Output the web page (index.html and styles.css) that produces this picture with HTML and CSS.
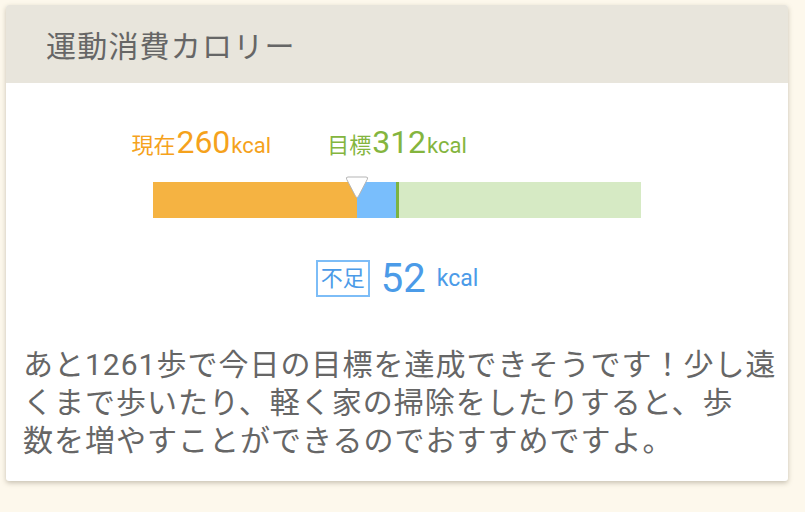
FILE: index.html
```html
<!DOCTYPE html>
<html lang="ja">
<head>
<meta charset="utf-8">
<link rel="stylesheet" href="styles.css">
</head>
<body>
<div class="card">
  <div class="card-header">運動消費カロリー</div>
  <div class="card-body">
    <div class="labels">
      <div class="label label-current"><span class="lab-jp">現在</span><span class="lab-num">260</span><span class="lab-unit">kcal</span></div>
      <div class="label label-target"><span class="lab-jp">目標</span><span class="lab-num">312</span><span class="lab-unit">kcal</span></div>
      <div></div>
    </div>
    <div class="bar">
      <div class="seg seg-current" style="width:204px"></div>
      <div class="seg seg-lack" style="width:39px"></div>
      <div class="seg seg-goal"></div>
      <div class="seg seg-rest"></div>
      <svg class="marker" style="left:192px" width="24" height="23" viewBox="0 0 24 23">
        <path d="M3 1 H21 Q23.5 1 22.3 3.3 L13.3 20.6 Q12 22.6 10.7 20.6 L1.7 3.3 Q0.5 1 3 1 Z" fill="#ffffff" stroke="#b5b5b5" stroke-width="1"/>
      </svg>
    </div>
    <div class="deficit">
      <span class="deficit-tag">不足</span>
      <span class="deficit-num">52</span>
      <span class="deficit-unit">kcal</span>
    </div>
    <p class="message">あと1261歩で今日の目標を達成できそうです！少し遠<br>くまで歩いたり、軽く家の掃除をしたりすると、歩<br>数を増やすことができるのでおすすめですよ。</p>
  </div>
</div>
</body>
</html>
```
FILE: styles.css
```css
html, body {
  margin: 0;
  padding: 0;
}
body {
  background: #fdf8ec;
  padding: 5px 0 0 6px;
  width: 805px;
  height: 512px;
  box-sizing: border-box;
  font-family: Roboto, "Noto Sans CJK JP", sans-serif;
}
.card {
  width: 782px;
  background: #ffffff;
  border-radius: 3px;
  box-shadow: 0 2px 5px rgba(120, 110, 90, 0.4);
  overflow: hidden;
}
.card-header {
  height: 78px;
  background: #e8e5dc;
  display: flex;
  align-items: center;
  padding-left: 40px;
  font-size: 30px;
  letter-spacing: 1.2px;
  color: #666666;
}
.card-body {
  padding: 41px 0 21px;
}
.labels {
  display: grid;
  grid-template-columns: 1fr auto 1fr;
  align-items: end;
  line-height: 36px;
  height: 36px;
}
.label {
  display: flex;
  align-items: baseline;
  white-space: nowrap;
}
.label-current {
  justify-self: end;
  margin-right: 56px;
  color: #f5a21c;
}
.label-target {
  color: #84b53e;
}
.lab-jp {
  font-size: 22px;
}
.lab-num {
  font-size: 32px;
  margin-left: 1px;
}
.lab-unit {
  font-size: 22px;
  margin-left: 1px;
}
.bar {
  position: relative;
  width: 488px;
  height: 36px;
  margin: 22px auto 0;
  display: flex;
}
.seg {
  height: 100%;
}
.seg-current {
  background: #f5b342;
}
.seg-lack {
  background: #79befc;
}
.seg-goal {
  width: 3px;
  background: #7cb342;
}
.seg-rest {
  flex: 1;
  background: #d6eac4;
}
.marker {
  position: absolute;
  top: -6px;
}
.deficit {
  display: flex;
  justify-content: center;
  align-items: center;
  margin-top: 42px;
  height: 37px;
  color: #4b9be8;
}
.deficit-tag {
  box-sizing: border-box;
  height: 37px;
  border: 2px solid #7dbdf7;
  padding: 0 3px;
  font-size: 22px;
  line-height: 33px;
}
.deficit-num {
  font-size: 40px;
  margin-left: 11px;
  line-height: 37px;
}
.deficit-unit {
  font-size: 23px;
  margin-left: 11px;
  line-height: 37px;
}
.message {
  margin: 49px 0 0;
  padding: 0 17px;
  font-size: 30px;
  letter-spacing: 1px;
  line-height: 38px;
  color: #666666;
  white-space: nowrap;
}
```
